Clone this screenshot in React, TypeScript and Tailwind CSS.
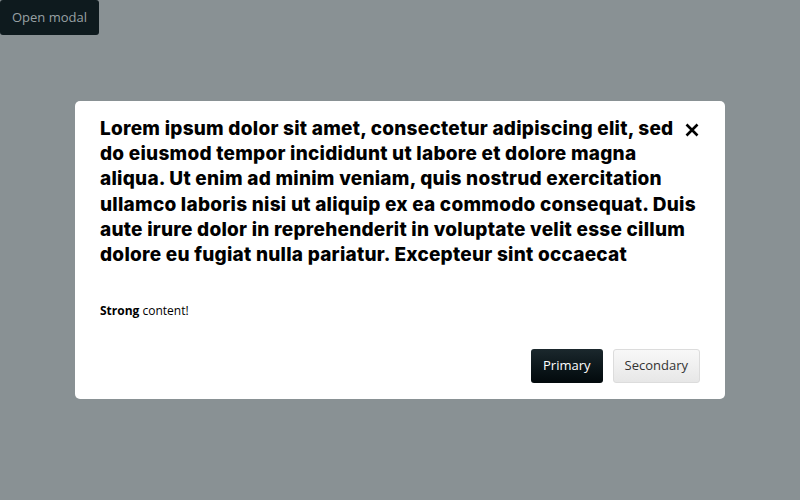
import React from "react";

const lines = [
  "Lorem ipsum dolor sit amet, consectetur adipiscing elit, sed",
  "do eiusmod tempor incididunt ut labore et dolore magna",
  "aliqua. Ut enim ad minim veniam, quis nostrud exercitation",
  "ullamco laboris nisi ut aliquip ex ea commodo consequat. Duis",
  "aute irure dolor in reprehenderit in voluptate velit esse cillum",
  "dolore eu fugiat nulla pariatur. Excepteur sint occaecat",
];

export default function App() {
  return (
    <div className="relative w-[800px] h-[500px] bg-[#899194] font-['Open_Sans',sans-serif] overflow-hidden">
      <button className="h-[35px] px-3 rounded-[3px] bg-[#0e1a1e] text-[13px] text-[#98a1a4]">
        Open modal
      </button>
      <div className="absolute left-[75px] top-[101px] w-[650px] bg-white rounded-[5px] px-[25px] pt-[15px] pb-[16px]">
        <div className="relative">
          <h2 className="font-['Inter',sans-serif] font-extrabold text-[19px] leading-[25.2px] text-black tracking-[0.25px]">
            {lines.map((l, i) => (
              <span key={i} className="block whitespace-nowrap">
                {l}
              </span>
            ))}
          </h2>
          <button className="absolute right-[1px] top-[7px] w-[14px] h-[14px] flex items-center justify-center">
            <svg width="14" height="14" viewBox="0 0 14 14">
              <path d="M1.5 1.5 L12.5 12.5 M12.5 1.5 L1.5 12.5" stroke="#000" strokeWidth="2.6" strokeLinecap="butt" />
            </svg>
          </button>
        </div>
        <p className="mt-[35px] text-[12px] text-black leading-[18px]">
          <strong className="font-bold">Strong</strong> content!
        </p>
        <div className="mt-[29px] flex justify-end gap-[10px]">
          <button className="h-[34px] px-3 rounded-[3px] bg-gradient-to-b from-[#1b282d] to-[#03090c] text-white text-[13px]">
            Primary
          </button>
          <button className="h-[34px] px-[11px] rounded-[3px] border border-[#dcdcdc] bg-gradient-to-b from-[#f8f8f8] to-[#e7e7e7] text-[#333] text-[13px]">
            Secondary
          </button>
        </div>
      </div>
    </div>
  );
}
